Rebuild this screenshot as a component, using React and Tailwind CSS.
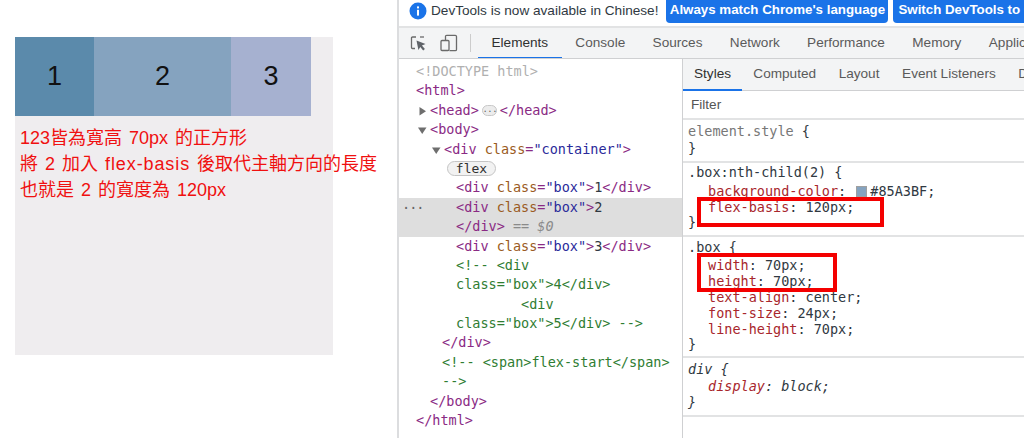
const TAG = "text-[#8a2a84]";
const ATTR = "text-[#9a5a22]";
const VAL = "text-[#2a2a9a]";
const COM = "text-[#2f7d32]";
const TXT = "text-[#303942]";
const PROP = "text-[#a8262c]";

function Arrow({ open }) {
  return (
    <svg width="9" height="9" viewBox="0 0 9 9" className="absolute left-[-12px] top-[5px]">
      <path d={open ? "M0 1.5h8.5L4.2 8z" : "M1.5 0v8.5L8 4.2z"} fill="#6e6e6e" />
    </svg>
  );
}

function Row({ indent, children, arrow, selected, dots }) {
  return (
    <div className={`relative h-[19.4px] leading-[19.4px] whitespace-pre ${indent} ${selected ? "bg-[#dedede]" : ""}`}>
      {dots && <span className="absolute left-[3px] top-[-3px] text-[#666] tracking-[-1px]">...</span>}
      <span className="relative">
        {arrow && <Arrow open={arrow === "open"} />}
        {children}
      </span>
    </div>
  );
}

function BoxDiv({ n, close = true }) {
  return (
    <>
      <span className={TAG}>&lt;div </span>
      <span className={ATTR}>class</span>
      <span className={TAG}>=</span>
      <span className={VAL}>"box"</span>
      <span className={TAG}>&gt;</span>
      <span className={TXT}>{n}</span>
      {close && <span className={TAG}>&lt;/div&gt;</span>}
    </>
  );
}

function ElementsTree() {
  return (
    <div className="w-[284px] pt-[3px] text-[13.5px] font-['DejaVu_Sans_Mono',monospace] border-r border-[#cfd0d2] shrink-0">
      <Row indent="pl-[17px]"><span className="text-[#b0b0b0]">&lt;!DOCTYPE html&gt;</span></Row>
      <Row indent="pl-[17px]"><span className={TAG}>&lt;html&gt;</span></Row>
      <Row indent="pl-[31px]" arrow="closed">
        <span className={TAG}>&lt;head&gt;</span>
        <span className="inline-block align-middle w-[15px] h-[11px] mx-[3px] rounded-full bg-[#ececec] border border-[#c8c8c8] text-[8px] leading-[7px] text-center text-[#555]">...</span>
        <span className={TAG}>&lt;/head&gt;</span>
      </Row>
      <Row indent="pl-[31px]" arrow="open"><span className={TAG}>&lt;body&gt;</span></Row>
      <Row indent="pl-[45px]" arrow="open">
        <span className={TAG}>&lt;div </span>
        <span className={ATTR}>class</span>
        <span className={TAG}>=</span>
        <span className={VAL}>"container"</span>
        <span className={TAG}>&gt;</span>
      </Row>
      <div className="h-[19.4px] pl-[48px] flex items-center">
        <span className="h-[15px] w-[49px] rounded-full bg-[#f2f2f2] border border-[#c4c4c4] text-[13px] leading-[13px] text-center text-[#303030]">flex</span>
      </div>
      <Row indent="pl-[57px]"><BoxDiv n="1" /></Row>
      <Row indent="pl-[57px]" selected dots><BoxDiv n="2" close={false} /></Row>
      <Row indent="pl-[57px]" selected>
        <span className={TAG}>&lt;/div&gt;</span>
        <span className="text-[#8a8a8a]"> == <i>$0</i></span>
      </Row>
      <Row indent="pl-[57px]"><BoxDiv n="3" /></Row>
      <Row indent="pl-[57px]"><span className={COM}>&lt;!-- &lt;div</span></Row>
      <Row indent="pl-[57px]"><span className={COM}>class="box"&gt;4&lt;/div&gt;</span></Row>
      <Row indent="pl-[122px]"><span className={COM}>&lt;div</span></Row>
      <Row indent="pl-[57px]"><span className={COM}>class="box"&gt;5&lt;/div&gt; --&gt;</span></Row>
      <Row indent="pl-[43px]"><span className={TAG}>&lt;/div&gt;</span></Row>
      <Row indent="pl-[43px]"><span className={COM}>&lt;!-- &lt;span&gt;flex-start&lt;/span&gt;</span></Row>
      <Row indent="pl-[43px]"><span className={COM}>--&gt;</span></Row>
      <Row indent="pl-[31px]"><span className={TAG}>&lt;/body&gt;</span></Row>
      <Row indent="pl-[17px]"><span className={TAG}>&lt;/html&gt;</span></Row>
    </div>
  );
}

function Decl({ name, value, italic, swatch }) {
  return (
    <div className={`pl-[20px] whitespace-pre ${italic ? "italic" : ""}`}>
      <span className={PROP}>{name}</span>
      <span className={TXT}>: </span>
      {swatch && <span className="inline-block align-[-1px] w-[11px] h-[11px] ml-[2px] mr-[3px] bg-[#85a3bf] border border-[#a0a0a0]" />}
      <span className={TXT}>{value}</span>
      <span className={TXT}>;</span>
    </div>
  );
}

function Rule({ selector, children, grey, italic, className = "", declTop = "", closeTop = "" }) {
  return (
    <div className={`pl-[5px] border-b-2 border-[#e2e3e4] leading-[16px] whitespace-pre ${className}`}>
      <div className={`${grey ? "text-[#777]" : TXT} ${italic ? "italic" : ""}`}>{selector} <span className={TXT}>{"{"}</span></div>
      {children && <div className={declTop}>{children}</div>}
      <div className={`${TXT} ${italic ? "italic" : ""} ${closeTop}`}>{"}"}</div>
    </div>
  );
}

function StylesPane() {
  return (
    <div className="relative flex-1 min-w-0 overflow-hidden">
      <div className="flex h-[32px] border-b border-[#cfd0d2] bg-[#f3f4f5] text-[13.6px] text-[#5a5a5a] whitespace-nowrap">
        <div className="px-[11px] leading-[30px] text-[#303030] border-b-2 border-[#1a73e8] h-[32px]">Styles</div>
        <div className="px-[11.3px] leading-[30px]">Computed</div>
        <div className="px-[11.3px] leading-[30px]">Layout</div>
        <div className="px-[11.3px] leading-[30px]">Event Listeners</div>
        <div className="px-[11.3px] leading-[30px]">DOM Breakpoints</div>
      </div>
      <div className="h-[29px] pl-[8px] bg-white border-b-2 border-[#e2e3e4] text-[13.6px] leading-[28px] text-[#555]">Filter</div>
      <div className="text-[13.5px] font-['DejaVu_Sans_Mono',monospace]">
        <Rule selector="element.style" grey className="pt-[2.5px] pb-[4.5px]" closeTop="mt-[1.5px]" />
        <Rule selector=".box:nth-child(2)" className="pt-[1.5px] pb-[5px]" declTop="mt-[3px]" closeTop="-mt-px">
          <Decl name="background-color" value="#85A3BF" swatch />
          <Decl name="flex-basis" value="120px" />
        </Rule>
        <Rule selector=".box" className="pt-[2px] pb-[4px]" declTop="mt-[2px]" closeTop="-mt-px">
          <Decl name="width" value="70px" />
          <Decl name="height" value="70px" />
          <Decl name="text-align" value="center" />
          <Decl name="font-size" value="24px" />
          <Decl name="line-height" value="70px" />
        </Rule>
        <Rule selector="div" italic className="pt-[3px] pb-[5px]" declTop="mt-[1px]">
          <Decl name="display" value="block" italic />
        </Rule>
      </div>
      {/* red marks drawn over the screenshot */}
      <div className="absolute left-[14px] top-[138px] w-[187px] h-[30px] border-[4px] border-[#f40000]" />
      <div className="absolute left-[14px] top-[194px] w-[140px] h-[39px] border-[4px] border-[#f40000]" />
    </div>
  );
}

function Toolbar() {
  const tabs = ["Console", "Sources", "Network", "Performance", "Memory", "Application"];
  return (
    <div className="flex items-stretch h-[31px] bg-[#f3f4f5] border-b border-[#cfd0d2] text-[13.6px] text-[#5a5a5a] whitespace-nowrap overflow-hidden">
      <div className="flex items-center w-[71px] shrink-0 pl-[11px] gap-[13px]">
        <svg width="17" height="17" viewBox="0 0 17 17" fill="none">
          <path d="M6 2H2.5a1 1 0 0 0-1 1v9.5a1 1 0 0 0 1 1H5" stroke="#6a6a6a" strokeWidth="1.3" />
          <path d="M6.5 5.5l9 3.6-3.6 1.5 3 3.4-1.7 1.5-2.9-3.4-1.9 3z" fill="#5f6368" />
          <path d="M10 2h4" stroke="#6a6a6a" strokeWidth="1.3" />
        </svg>
        <svg width="18" height="18" viewBox="0 0 18 18" fill="none" stroke="#6a6a6a" strokeWidth="1.3">
          <path d="M5.5 6V2.5a1.2 1.2 0 0 1 1.2-1.2h8.6a1.2 1.2 0 0 1 1.2 1.2v13a1.2 1.2 0 0 1-1.2 1.2H9.5" />
          <rect x="1" y="6.5" width="8" height="10" rx="1" />
        </svg>
      </div>
      <div className="w-px h-[18px] self-center bg-[#ccc] shrink-0 mr-[7px]" />
      <div className="px-[13.5px] leading-[30px] text-[#303030] border-b-2 border-[#1a73e8] h-[31px]">Elements</div>
      {tabs.map((t) => (
        <div key={t} className="px-[13.7px] leading-[30px]">{t}</div>
      ))}
    </div>
  );
}

function InfoBar() {
  return (
    <div className="flex items-center h-[28px] pb-[4px] bg-white border-b-2 border-[#e2e3e4] text-[13.6px] whitespace-nowrap overflow-hidden">
      <svg width="18" height="18" viewBox="0 0 18 18" className="ml-[10px] shrink-0">
        <circle cx="9" cy="9" r="8.5" fill="#1a73e8" />
        <rect x="8" y="7.8" width="2" height="5.8" fill="#fff" />
        <rect x="8" y="4.4" width="2" height="2" fill="#fff" />
      </svg>
      <span className="ml-[4px] text-[#303942]">DevTools is now available in Chinese!</span>
      <div className="ml-[8px] h-[24px] mt-[-1px] w-[222px] text-center leading-[22px] rounded-b-[4px] bg-[#1a73e8] text-white font-bold text-[13.3px] shrink-0">Always match Chrome's language</div>
      <div className="ml-[5px] h-[24px] mt-[-1px] pl-[5px] pr-[5px] leading-[22px] rounded-b-[4px] bg-[#1a73e8] text-white font-bold text-[13.3px] shrink-0">Switch DevTools to Chinese</div>
    </div>
  );
}

export default function App() {
  return (
    <div className="flex w-[1024px] h-[438px] overflow-hidden bg-white font-['Liberation_Sans','Noto_Sans_CJK_TC',sans-serif]">
      <div className="w-[397px] shrink-0 pl-[15px] pt-[37px]">
        <div className="w-[318px] h-[318px] bg-[#efedef]">
          <div className="flex h-[79px] text-[27px] text-center leading-[79px] text-[#111]">
            <div className="w-[79px] bg-[#5b8aab]">1</div>
            <div className="w-[137px] bg-[#85a3bf]">2</div>
            <div className="w-[80px] bg-[#a6b1d0]">3</div>
          </div>
          <div className="pl-[5px] pt-[9px] text-[18px] leading-[26px] text-[#f01010] whitespace-nowrap">
            <div className="[word-spacing:2px]">123皆為寬高 70px 的正方形</div>
            <div className="[word-spacing:2px]">將 2 加入 <span className="tracking-[0.9px]">flex-basis</span> 後取代主軸方向的長度</div>
            <div className="[word-spacing:2px]">也就是 2 的寬度為 120px</div>
          </div>
        </div>
      </div>
      <div className="flex-1 min-w-0 flex flex-col border-l-2 border-[#dcdddf]">
        <InfoBar />
        <Toolbar />
        <div className="flex flex-1 min-h-0">
          <ElementsTree />
          <StylesPane />
        </div>
      </div>
    </div>
  );
}
